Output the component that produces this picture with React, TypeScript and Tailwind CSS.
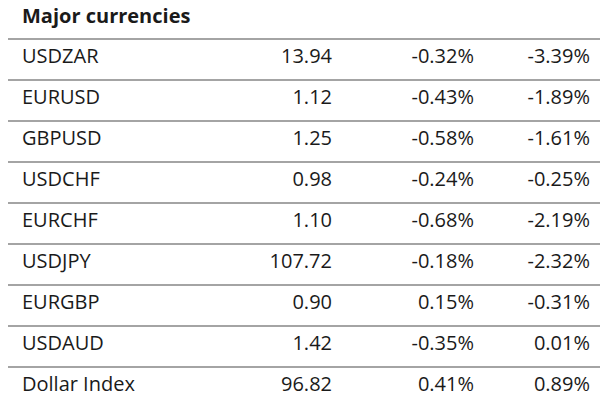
const rows = [
  ['USDZAR', '13.94', '-0.32%', '-3.39%'],
  ['EURUSD', '1.12', '-0.43%', '-1.89%'],
  ['GBPUSD', '1.25', '-0.58%', '-1.61%'],
  ['USDCHF', '0.98', '-0.24%', '-0.25%'],
  ['EURCHF', '1.10', '-0.68%', '-2.19%'],
  ['USDJPY', '107.72', '-0.18%', '-2.32%'],
  ['EURGBP', '0.90', '0.15%', '-0.31%'],
  ['USDAUD', '1.42', '-0.35%', '0.01%'],
  ['Dollar Index', '96.82', '0.41%', '0.89%'],
]

export default function App() {
  return (
    <div className="w-[600px] h-[400px] overflow-hidden bg-white text-[#1a1a1a] font-['Open_Sans',sans-serif]">
      <div className="h-[38px] pl-[22px] pt-[1px] text-[20px] font-bold leading-[30px]">Major currencies</div>
      <div className="ml-[8px]">
        {rows.map((row) => (
          <div key={row[0]} className="flex items-center h-[41px] border-t-2 border-[#a4a4a4] text-[20px] pb-[7px]">
            <div className="w-[200px] pl-[14px]">{row[0]}</div>
            <div className="w-[124px] text-right">{row[1]}</div>
            <div className="w-[142px] text-right">{row[2]}</div>
            <div className="w-[116px] text-right">{row[3]}</div>
          </div>
        ))}
      </div>
    </div>
  )
}
